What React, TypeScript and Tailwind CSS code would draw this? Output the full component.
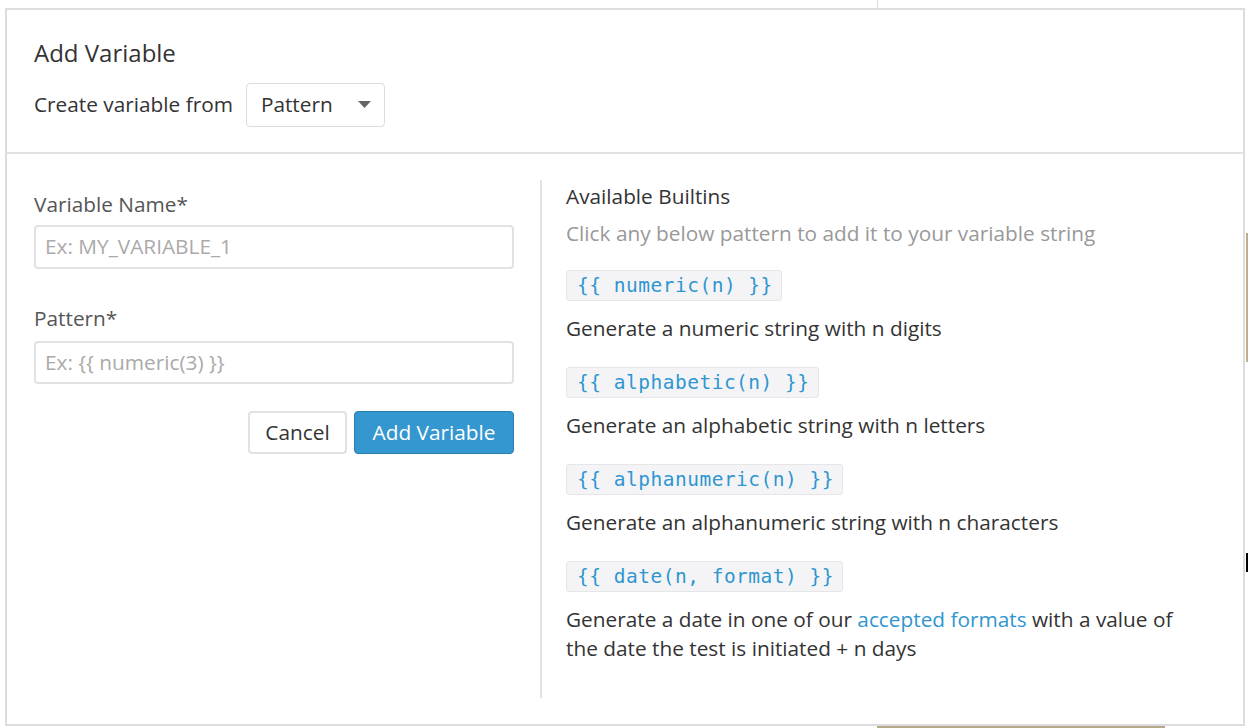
import React from 'react';

const builtins = [
  { code: '{{ numeric(n) }}', desc: 'Generate a numeric string with n digits' },
  { code: '{{ alphabetic(n) }}', desc: 'Generate an alphabetic string with n letters' },
  { code: '{{ alphanumeric(n) }}', desc: 'Generate an alphanumeric string with n characters' },
];

const Chip: React.FC<{ code: string }> = ({ code }) => (
  <div className="inline-flex h-[31px] items-center rounded-[3px] border border-[#e6e6e9] bg-[#f4f4f6] pl-[10px] pr-[8px] font-['DejaVu_Sans_Mono',monospace] text-[19.5px] leading-none tracking-[0.5px] text-[#2f96d0]">
    {code}
  </div>
);

const App: React.FC = () => {
  return (
    <div className="relative h-[728px] w-full overflow-hidden bg-white font-['Open_Sans',sans-serif]">
      {/* bits of the page behind the modal */}
      <div className="absolute left-[877px] top-0 h-[8px] w-px bg-[#dcdce0]" />
      <div className="absolute left-[877px] top-[726px] h-[2px] w-[288px] bg-[#b8a88a]" />
      <div className="absolute left-[1246px] top-[233px] h-[129px] w-[2px] bg-[#c2ad8a]" />
      <div className="absolute left-[1246px] top-[553px] h-[19px] w-[2px] bg-black" />

      <div className="relative ml-[5px] mt-[8px] flex h-[718px] w-[1240px] flex-col border-2 border-[#dcdce1] bg-white">
        {/* header */}
        <div className="border-b-2 border-[#e2e2e6] pb-[25px] pl-[27px] pt-[28px]">
          <h2 className="text-[24px] leading-[30px] text-[#333]">Add Variable</h2>
          <div className="mt-[15px] flex items-center gap-[13px]">
            <span className="text-[20.8px] text-[#333]">Create variable from</span>
            <div className="flex h-[44px] w-[139px] items-center justify-between rounded-[4px] border border-[#dcdce0] pl-[14px] pr-[13px] text-[20.8px] text-[#333]">
              <span>Pattern</span>
              <svg width="13" height="8" viewBox="0 0 13 8">
                <path d="M0 0h13L6.5 7z" fill="#666" />
              </svg>
            </div>
          </div>
        </div>

        {/* body */}
        <div className="flex flex-1">
          <div className="w-[507px] pl-[27px] pt-[37px]">
            <label className="block text-[20.8px] leading-[26px] text-[#555]">Variable Name*</label>
            <div className="mt-[8px] flex h-[44px] w-[480px] items-center rounded-[4px] border-2 border-[#e2e2e6] px-[9px] text-[20.8px] text-[#aaa]">
              Ex: MY_VARIABLE_1
            </div>
            <label className="mt-[36px] block text-[20.8px] leading-[26px] text-[#555]">Pattern*</label>
            <div className="mt-[10px] flex h-[43px] w-[480px] items-center rounded-[4px] border-2 border-[#e2e2e6] px-[9px] text-[20.8px] text-[#aaa]">
              Ex: {'{{ numeric(3) }}'}
            </div>
            <div className="mt-[27px] flex w-[480px] justify-end gap-[7px]">
              <button className="h-[43px] w-[99px] rounded-[4px] border-2 border-[#e2e2e6] bg-white text-[20.8px] text-[#333]">
                Cancel
              </button>
              <button className="h-[43px] w-[160px] rounded-[4px] border border-[#2a7db0] bg-[#3597d0] text-[20.8px] text-white">
                Add Variable
              </button>
            </div>
          </div>

          <div className="my-[26px] ml-[26px] border-l-2 border-[#e2e2e6] pl-[24px] pt-[2px]">
            <div className="text-[20.8px] leading-[29px] text-[#333]">Available Builtins</div>
            <div className="mt-[8px] text-[20.8px] leading-[29px] text-[#999]">
              Click any below pattern to add it to your variable string
            </div>
            {builtins.map((b, i) => (
              <div key={i} className={i === 0 ? 'mt-[22px]' : 'mt-[24px]'}>
                <Chip code={b.code} />
                <div className="mt-[13px] text-[20.8px] leading-[29px] text-[#333]">{b.desc}</div>
              </div>
            ))}
            <div className="mt-[24px]">
              <Chip code="{{ date(n, format) }}" />
              <div className="mt-[13px] w-[622px] text-[20.8px] leading-[29px] text-[#333]">
                Generate a date in one of our <span className="text-[#2f96d0]">accepted formats</span> with a value of the date the test is initiated + n days
              </div>
            </div>
          </div>
        </div>
      </div>
    </div>
  );
};

export default App;
